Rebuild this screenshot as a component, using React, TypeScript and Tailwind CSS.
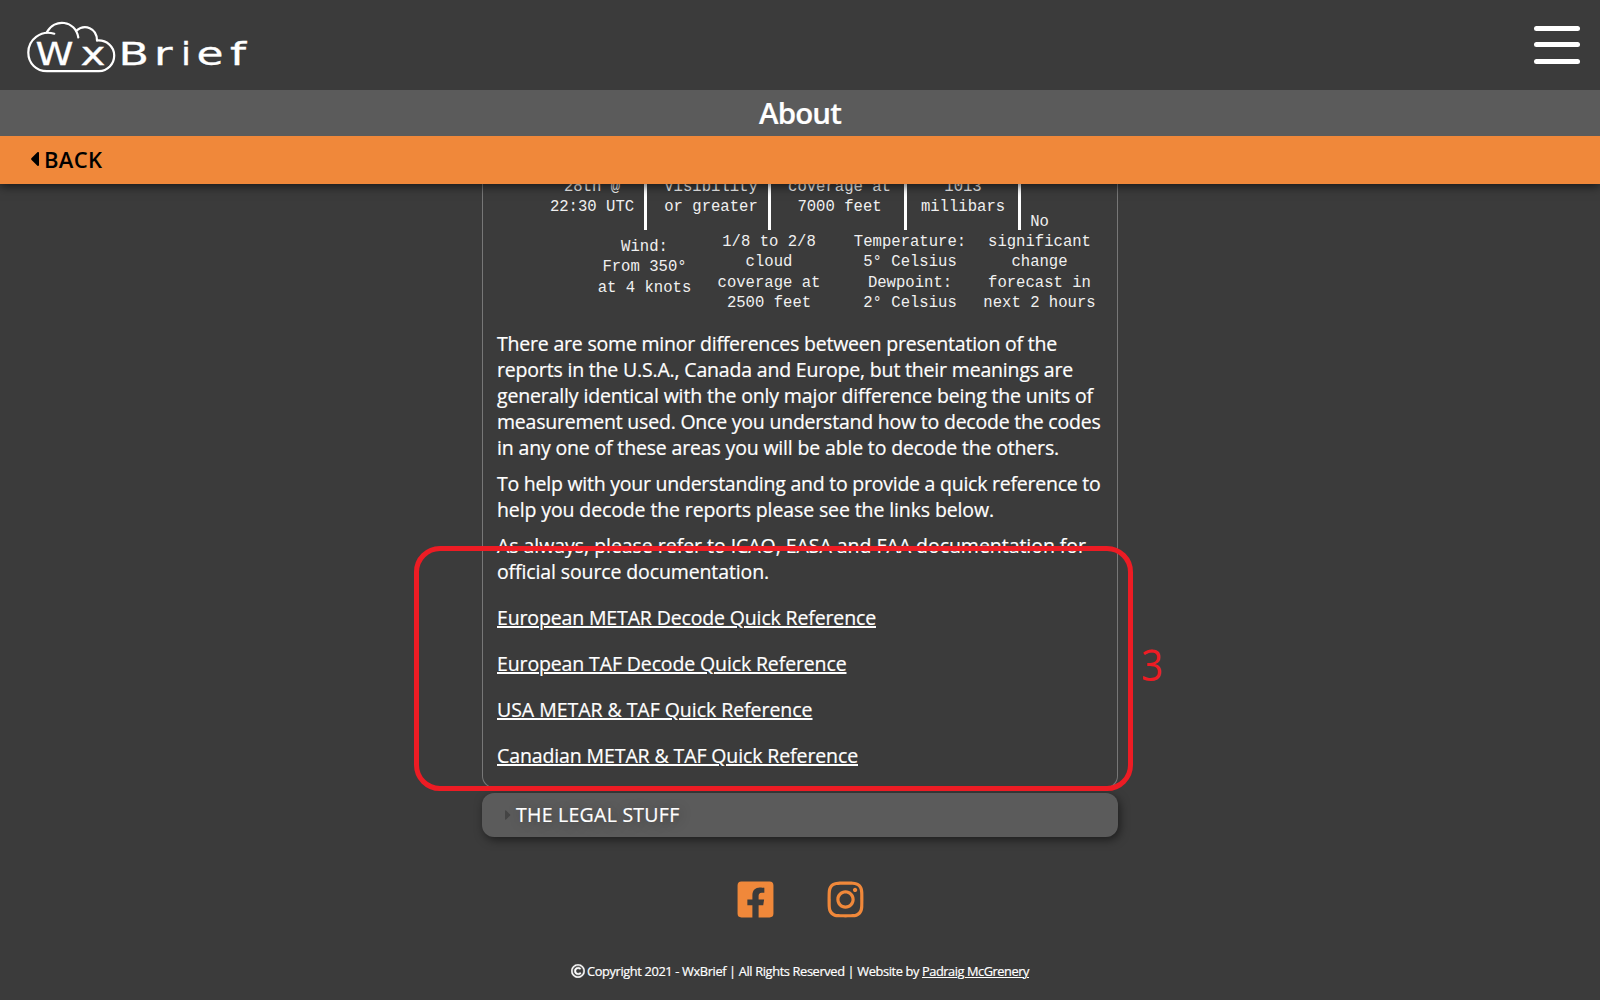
import { useLayoutEffect, useRef, useState } from "react";
import { FaCaretLeft, FaCaretRight, FaFacebookSquare, FaInstagram, FaRegCopyright } from "react-icons/fa";

/** A single line of text whose tracking is adjusted so that it spans `width` pixels. */
function Line({ text, width, className = "" }: { text: string; width: number; className?: string }) {
  const ref = useRef<HTMLSpanElement>(null);
  const [tracking, setTracking] = useState(0);
  useLayoutEffect(() => {
    if (!ref.current) return;
    const natural = ref.current.getBoundingClientRect().width - tracking * text.length;
    setTracking((width - natural) / text.length);
  }, [text, width]);
  return (
    <span ref={ref} className={"inline-block whitespace-pre " + className} style={{ letterSpacing: tracking + "px" }}>
      {text}
    </span>
  );
}

const logoLetters = [
  { c: "W", x: 35.5, w: 38 },
  { c: "x", x: 80.5, w: 25 },
  { c: "B", x: 118.5, w: 30.5 },
  { c: "r", x: 154, w: 18.5 },
  { c: "i", x: 181, w: 10 },
  { c: "e", x: 196.5, w: 27 },
  { c: "f", x: 230, w: 16 },
];

function Logo() {
  return (
    <svg width="280" height="90" viewBox="0 0 280 90" fill="none" className="block">
      <g stroke="white" strokeWidth="2.2" strokeLinecap="round">
        <path d="M54.3 33.7C40.5 29.8 28.3 39.5 28.3 52.5C28.3 63.5 36.5 71.2 47 71.2H99A15.6 15.6 0 0 0 114.2 55.5C114.2 46.5 106.5 39.7 97 40.5" />
        <path d="M97 40.5C97 28 84.5 23.5 76.3 30.8" />
        <path d="M78.3 37.5C75.5 20 54 18 46.8 32.3" />
      </g>
      <g fill="white" stroke="white" strokeWidth="0.3" fontFamily="DejaVu Sans, sans-serif" fontSize="32">
        {logoLetters.map((l) => (
          <text key={l.c} x={l.x} y="65.2" textLength={l.w} lengthAdjust="spacingAndGlyphs">
            {l.c}
          </text>
        ))}
      </g>
    </svg>
  );
}

const notes = [
  { lines: ["28th @", "22:30 UTC"], box: "left-[31px] top-[-7.5px]" },
  { lines: ["Visibility", "or greater"], box: "left-[150px] top-[-7.5px]" },
  { lines: ["coverage at", "7000 feet"], box: "left-[278.5px] top-[-7.5px]" },
  { lines: ["1013", "millibars"], box: "left-[402px] top-[-7.5px]" },
  { lines: ["Wind:", "From 350°", "at 4 knots"], box: "left-[83.5px] top-[53px]" },
  { lines: ["1/8 to 2/8", "cloud", "coverage at", "2500 feet"], box: "left-[208px] top-[48px]" },
  { lines: ["Temperature:", "5° Celsius", "Dewpoint:", "2° Celsius"], box: "left-[349px] top-[48px]" },
  { lines: ["No", "significant", "change", "forecast in", "next 2 hours"], box: "left-[478.5px] top-[27.5px]" },
];

const bars = ["left-[161px]", "left-[285px]", "left-[420.5px]", "left-[535px]"];

function MetarDiagram() {
  return (
    <div className="relative h-[147px] font-['Liberation_Mono',monospace] text-[15.6px] leading-[20.4px] text-[#f0f0f0]">
      {bars.map((b) => (
        <div key={b} className={"absolute top-0 h-[46px] w-[3px] bg-white " + b} />
      ))}
      {notes.map((n) => (
        <div key={n.box} className={"absolute w-[156px] text-center " + n.box}>
          {n.lines.map((l) => (
            <div key={l}>{l}</div>
          ))}
        </div>
      ))}
    </div>
  );
}

const paragraphs = [
  [
    { t: "There are some minor differences between presentation of the", w: 560 },
    { t: "reports in the U.S.A., Canada and Europe, but their meanings are", w: 576 },
    { t: "generally identical with the only major difference being the units of", w: 596 },
    { t: "measurement used. Once you understand how to decode the codes", w: 603.5 },
    { t: "in any one of these areas you will be able to decode the others.", w: 562 },
  ],
  [
    { t: "To help with your understanding and to provide a quick reference to", w: 603.5 },
    { t: "help you decode the reports please see the links below.", w: 497 },
  ],
  [
    { t: "As always, please refer to ICAO, EASA and FAA documentation for", w: 589 },
    { t: "official source documentation.", w: 272 },
  ],
];

const links = [
  { t: "European METAR Decode Quick Reference", w: 379 },
  { t: "European TAF Decode Quick Reference", w: 349.5 },
  { t: "USA METAR & TAF Quick Reference", w: 315.5 },
  { t: "Canadian METAR & TAF Quick Reference", w: 361 },
];

export default function App() {
  return (
    <div className="relative flex h-[1000px] w-[1600px] flex-col overflow-hidden bg-[#3b3b3b] font-['Open_Sans',sans-serif] text-white">
      <header className="relative z-10 shadow-[0_2px_10px_rgba(0,0,0,0.65)]">
        <div className="flex h-[90px] items-center justify-between bg-[#3b3b3b] pr-5">
          <Logo />
          <button aria-label="Menu" className="flex w-[46px] flex-col">
            <span className="h-[5px] rounded-full bg-white" />
            <span className="mt-[11px] h-[5px] rounded-full bg-white" />
            <span className="mt-3 h-[5px] rounded-full bg-white" />
          </button>
        </div>
        <h1 className="flex h-[46px] items-center justify-center bg-[#5b5b5b] text-[29.5px] font-semibold [-webkit-text-stroke:0.2px_white]">
          <Line text="About" width={82} />
        </h1>
        <a className="flex h-12 items-center bg-[#f0883a] pb-[2px] pl-[27px] text-[22px] font-semibold text-black">
          <FaCaretLeft className="mr-[2px] h-[24px] w-[15px]" />
          <Line text="BACK" width={58.5} />
        </a>
      </header>

      <main className="mx-auto w-[636px]">
        <section className="h-[604px] rounded-b-xl border border-t-0 border-[#777]">
          <MetarDiagram />
          <div className="pl-[14px] text-[19.5px] leading-[26px] [-webkit-text-stroke:0.2px_white]">
            {paragraphs.map((p, i) => (
              <p key={i} className="mb-[10px] flex flex-col items-start">
                {p.map((l) => (
                  <Line key={l.t} text={l.t} width={l.w} />
                ))}
              </p>
            ))}
            <div className="mt-5 flex flex-col items-start gap-5">
              {links.map((l) => (
                <a key={l.t} className="flex h-[26px]">
                  <Line text={l.t} width={l.w} className="underline decoration-2 underline-offset-1" />
                </a>
              ))}
            </div>
          </div>
        </section>
        <section className="mt-[5px] flex h-11 items-center rounded-xl bg-[#5b5b5b] pl-[21px] text-[19.5px] shadow-[2px_3px_10px_rgba(0,0,0,0.5)]">
          <FaCaretRight className="mr-[3px] h-4 w-[10px] text-[#444]" />
          <Line
            text="THE LEGAL STUFF"
            width={163.5}
            className="[-webkit-text-stroke:0.2px_white] [text-shadow:2px_2px_12px_rgba(0,0,0,0.35)]"
          />
        </section>
      </main>

      <footer className="flex flex-col items-center">
        <div className="mt-[41.5px] flex gap-[49px] text-[#f0883a]">
          <FaFacebookSquare className="h-[41px] w-[41px]" />
          <FaInstagram className="h-[41px] w-[41px]" />
        </div>
        <p className="mt-[41.5px] flex h-5 items-center text-[12.8px] leading-5 [-webkit-text-stroke:0.2px_white]">
          <FaRegCopyright className="mr-[2px] h-[14px] w-[14px] stroke-white stroke-[16px]" />
          <Line text="Copyright 2021 - WxBrief | All Rights Reserved | Website by " width={335} />
          <a>
            <Line text="Padraig McGrenery" width={107} className="underline decoration-1 underline-offset-1" />
          </a>
        </p>
      </footer>

      <div className="absolute left-[414px] top-[546px] z-20 h-[245px] w-[719px] rounded-[26px] border-[5px] border-[#ed1c24]" />
      <div className="absolute left-[1141px] top-[635px] z-20 origin-left scale-x-[0.9] text-[43px] leading-[60px] text-[#ed1c24]">3</div>
    </div>
  );
}
